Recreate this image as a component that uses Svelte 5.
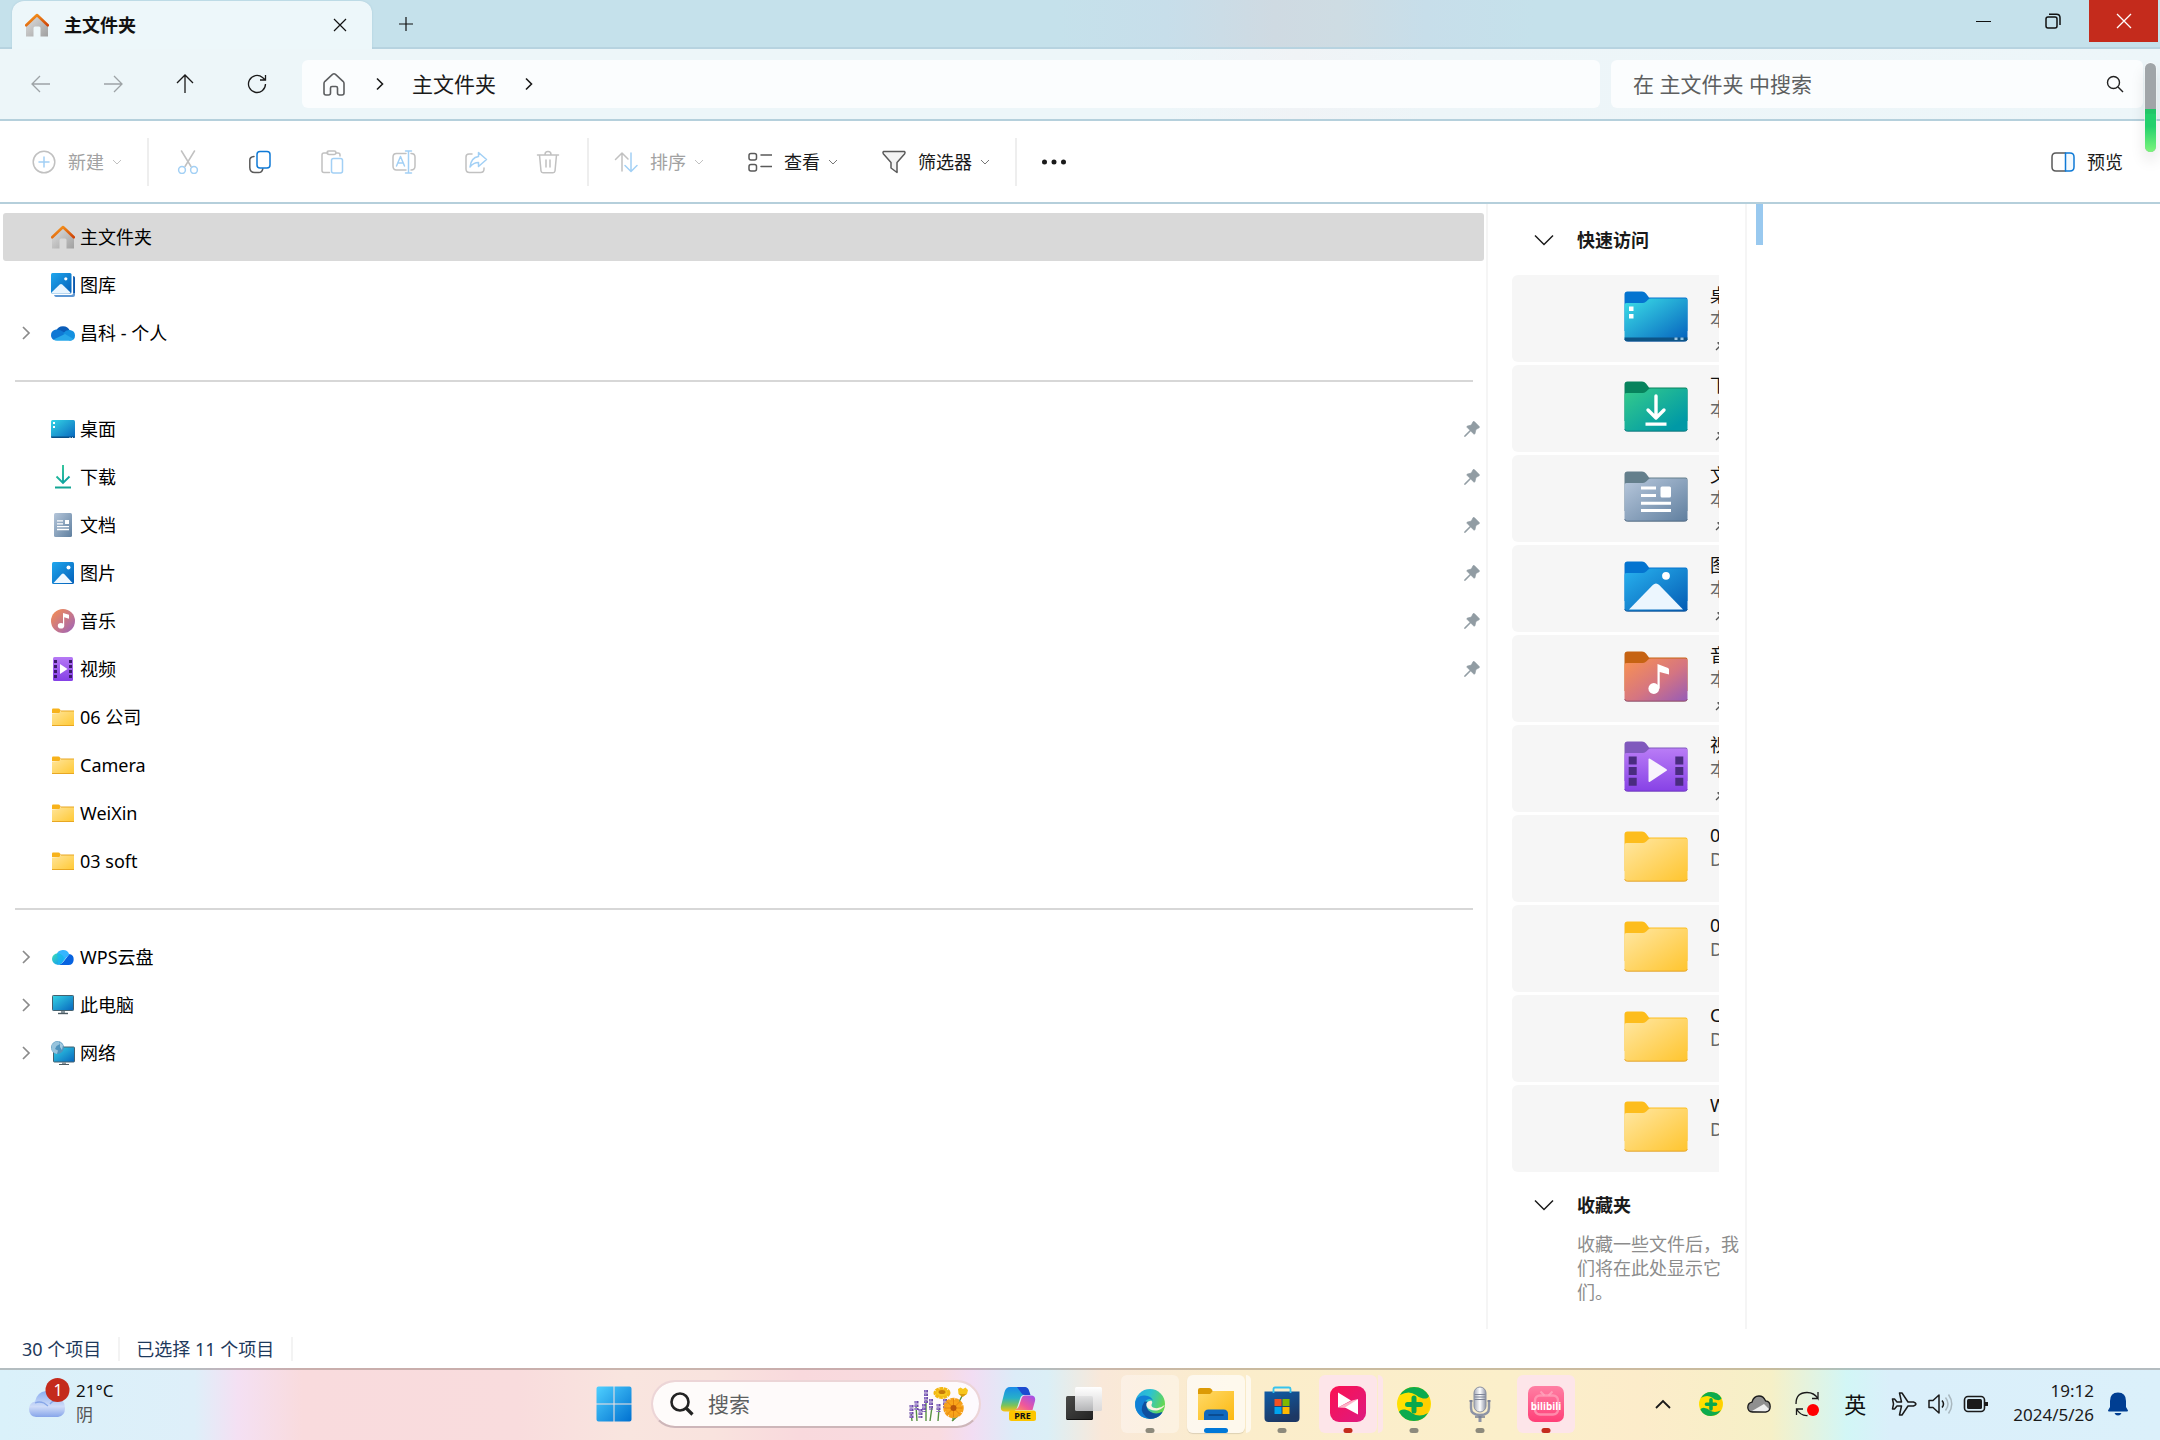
<script lang="ts">
	type NavItem = { icon: string; label: string; expandable?: boolean; pinned?: boolean };

	let selected = $state('主文件夹');
	let query = $state('');

	const groups: NavItem[][] = [
		[
			{ icon: 'home', label: '主文件夹' },
			{ icon: 'gallery', label: '图库' },
			{ icon: 'onedrive', label: '昌科 - 个人', expandable: true },
		],
		[
			{ icon: 'desktop', label: '桌面', pinned: true },
			{ icon: 'download', label: '下载', pinned: true },
			{ icon: 'document', label: '文档', pinned: true },
			{ icon: 'picture', label: '图片', pinned: true },
			{ icon: 'music', label: '音乐', pinned: true },
			{ icon: 'video', label: '视频', pinned: true },
			{ icon: 'folder', label: '06 公司' },
			{ icon: 'folder', label: 'Camera' },
			{ icon: 'folder', label: 'WeiXin' },
			{ icon: 'folder', label: '03 soft' },
		],
		[
			{ icon: 'wps', label: 'WPS云盘', expandable: true },
			{ icon: 'pc', label: '此电脑', expandable: true },
			{ icon: 'network', label: '网络', expandable: true },
		],
	];

	const quick = [
		{ kind: 'desktop', name: '桌面', place: '本地存储', pinned: true },
		{ kind: 'download', name: '下载', place: '本地存储', pinned: true },
		{ kind: 'document', name: '文档', place: '本地存储', pinned: true },
		{ kind: 'picture', name: '图片', place: '本地存储', pinned: true },
		{ kind: 'music', name: '音乐', place: '本地存储', pinned: true },
		{ kind: 'video', name: '视频', place: '本地存储', pinned: true },
		{ kind: 'folder', name: '06 公司', place: 'D:\\', pinned: false },
		{ kind: 'folder', name: '03 soft', place: 'D:\\', pinned: false },
		{ kind: 'folder', name: 'Camera', place: 'D:\\', pinned: false },
		{ kind: 'folder', name: 'WeiXin', place: 'D:\\', pinned: false },
	];

	const tools = [
		{ icon: 'cut', label: '剪切', off: true },
		{ icon: 'copy', label: '复制', off: false },
		{ icon: 'paste', label: '粘贴', off: true },
		{ icon: 'rename', label: '重命名', off: true },
		{ icon: 'share', label: '共享', off: true },
		{ icon: 'delete', label: '删除', off: true },
	];

	const apps = [
		{ icon: 'copilot', label: 'Copilot', cell: '', dot: '' },
		{ icon: 'taskview', label: '任务视图', cell: '', dot: '' },
		{ icon: 'edge', label: 'Edge', cell: 'light', dot: 'gray' },
		{ icon: 'explorer', label: '文件资源管理器', cell: 'active stacked', dot: 'blue' },
		{ icon: 'store', label: 'Store', cell: '', dot: 'gray' },
		{ icon: 'capture', label: '录屏', cell: 'pink stacked', dot: 'red' },
		{ icon: 'safe', label: '360', cell: '', dot: 'gray' },
		{ icon: 'mic', label: '录音机', cell: '', dot: 'gray' },
		{ icon: 'bili', label: '哔哩哔哩', cell: 'pink', dot: 'red' },
	];
</script>

{#snippet chevron(cls: string)}
	<svg class={cls} viewBox="0 0 10 6" width="10" height="6" fill="none" stroke="currentColor" aria-hidden="true"><path d="M1 1l4 4 4-4" /></svg>
{/snippet}

{#snippet pin()}
	<svg class="pin" viewBox="0 0 16 16" width="16" height="16" aria-hidden="true">
		<path fill="#919ca3" stroke="#919ca3" stroke-width=".6" d="M9 .7Q9.800 0 10.600.8l4.600 4.600q.7.8-.1 1.400L12 8.500l-1 4.100q-.4 1-1.300.3L6.700 10 1.300 15.500H.5v-.8L6 9.300 3 6.300q-.6-.8.400-1.200L7.300 4z" />
	</svg>
{/snippet}

{#snippet globe360()}
	<circle cx="17" cy="17" r="17" fill="#ffe000" />
	<path d="M29 5a17 17 0 0 1-24 24z" fill="#ffc800" opacity=".7" />
	<path d="M3 8Q8 0 17 0q10 0 15 9-1 3-6 2.500Q22 11 19 8 12 3 3 8zM31 26q-5 8-14 8-10 0-15-9 1-3 6-2.500 4 .5 7 3.500 7 5 16 0z" fill="#0cab4f" />
	<path d="M17 11v13M10.500 17.500h13" stroke="#0aa84c" stroke-width="5" stroke-linecap="round" />
{/snippet}

{#snippet navIcon(kind: string)}
	<svg class="nav-icon" viewBox="0 0 24 24" width="24" height="24" fill="none" aria-hidden="true">
		{#if kind === 'home'}
			<path d="M1 12.500L12 3l11 9.500v11h-7.500V15q0-1.500-1.500-1.500h-4Q8.500 13.500 8.500 15v8.500H1z" fill="url(#g-wall)" />
			<path d="M1.200 12.300L12 2l10.800 10.300" stroke="url(#g-roof)" stroke-width="2.600" stroke-linecap="round" stroke-linejoin="round" />
		{:else if kind === 'gallery'}
			<path d="M22.200 3Q24 3.500 24 5v17q0 2-2 2H5q-1.500 0-2-2h17q2.200 0 2.200-2z" fill="#5e97d3" />
			<path d="M22.200 3Q24 3.500 24 5v15h-1.800z" fill="#0a58ad" />
			<rect width="20.500" height="20.500" rx="1.500" fill="url(#g-pic)" />
			<path d="M.5 19.500l8.200-8q1.300-1.200 2.600 0l8.200 8q-.6 1-2 1H2q-1.200 0-1.500-1z" fill="#e8f5ff" />
			<circle cx="14.800" cy="5.800" r="1.600" fill="#fff" />
		{:else if kind === 'onedrive'}
			<path d="M5 10a7.500 7.500 0 0 1 14 0l-6 4z" fill="#0a5cb8" />
			<path d="M5 8.500Q9 8 12.500 11L18 14 3 19Q0 17.500 0 14.200 0 9.500 5 8.500z" fill="#0f78d4" />
			<path d="M12.500 12Q15 8.500 19 9q5 .8 5 5.500 0 5-5 5.200l-6-3z" fill="#1490df" />
			<path d="M2.500 18.500L14 13l8.500 5q-1.500 1.700-4 1.700H6q-2.200 0-3.500-1.200z" fill="#28a8ea" />
		{:else if kind === 'desktop'}
			<rect y="3" width="24" height="18" rx="1.500" fill="url(#g-desk)" />
			<path d="M0 19.500h24q0 1.500-1.500 1.500h-21Q0 21 0 19.500z" fill="#0b4f86" />
			<path d="M2 5h2v2H2zM2 9h2v2H2zM18.500 20h1v.8h-1zM21 20h1v.8h-1z" fill="#fff" />
		{:else if kind === 'download'}
			<path d="M12 0v18M5.500 11.500L12 18l6.500-6.500" stroke="url(#g-down)" stroke-width="1.900" />
			<path d="M4 22.500h16" stroke="#12a594" stroke-width="2" />
		{:else if kind === 'document'}
			<rect x="3" width="18" height="24" rx="1.500" fill="url(#g-doc)" />
			<path d="M6 7.800h6M6 10.800h6M6 13.600h12M6 16.500h12" stroke="#fff" stroke-width="1.300" />
			<rect x="14" y="7" width="4" height="4" fill="#fff" />
		{:else if kind === 'picture'}
			<rect x="1" y="1" width="22" height="22" rx="1.500" fill="url(#g-pic)" />
			<path d="M2.500 22l8.300-9q1.200-1.200 2.400 0l8.300 9z" fill="#eff8ff" />
			<circle cx="17.500" cy="6.500" r="2" fill="#fff" />
		{:else if kind === 'music'}
			<circle cx="12" cy="12" r="12" fill="url(#g-music)" />
			<ellipse cx="10" cy="16.800" rx="3.200" ry="2.800" fill="#fff" />
			<path d="M12 16.500V4l6 1.800v4L13.200 8.300v8.200z" fill="#fff" />
		{:else if kind === 'video'}
			<rect x="2" width="20" height="24" rx="1.500" fill="url(#g-video)" />
			<path d="M4.500 3v18M19.500 3v18" stroke="#3b1b6b" stroke-width="3" stroke-dasharray="3 2" />
			<path d="M9 7l7.500 5L9 17z" fill="#fff" />
		{:else if kind === 'folder'}
			<path d="M1 8V4.500Q1 3.500 2 3.500h5.500q1 0 1.500 1l.5 1-1 3z" fill="#f7b21b" />
			<path d="M1 8.500h7L10 6h13v14.500H1z" fill="url(#g-folder)" />
			<path d="M9.500 6H23M1 20.500h22" stroke="#e8a722" />
		{:else if kind === 'wps'}
			<path d="M5.500 10a6.700 6.700 0 0 1 12.800-.5L12 16z" fill="#35b6ff" />
			<circle cx="6.800" cy="14" r="5.800" fill="url(#g-wps)" />
			<path d="M6 20q4 0 7-4l3.500-4.500Q18 9.500 18.500 9a5.600 5.600 0 0 1-1 11z" fill="#0763e0" />
			<path d="M5.500 9Q10 8 14.500 13.500L11 18q-2 2-4.500 1.800 2-6-1-10.800z" fill="#18b9f2" opacity=".7" />
		{:else if kind === 'pc'}
			<rect x="1.500" y="2.500" width="21" height="15" rx=".8" fill="url(#g-desk)" stroke="#45616f" />
			<path d="M10 18h4v2h-4z" fill="#8a979e" /><path d="M7 20.500h10" stroke="#4b5a62" stroke-width="1.400" />
		{:else if kind === 'network'}
			<rect x="2.500" y="6" width="21" height="15" rx=".8" fill="url(#g-desk)" stroke="#45616f" />
			<path d="M11 21h4v2h-4z" fill="#8a979e" /><path d="M8 23.500h10" stroke="#4b5a62" />
			<circle cx="6.500" cy="6.500" r="6.500" fill="#4f93bd" />
			<path d="M1 3.500Q4 0 8 .4L9 3 5.500 5 4 8l3 1.500-1 3.400Q1 12 .3 8z" fill="#a9cfe4" opacity=".8" />
			<path d="M9 1l3 3-1 5-2-3z" fill="#c9e1ee" opacity=".7" />
		{/if}
	</svg>
{/snippet}

{#snippet folderIcon(kind: string)}
	<svg class="big-folder" viewBox="0 0 64 51" width="64" height="51" fill="none" aria-hidden="true">
		<path class="back {kind}" d="M.5 14V3.500Q.5.5 3.500.5H18q2.500 0 4 2l3 4h36.500q2 0 2 2V40H.500z" />
		<path fill="url(#f-{kind})" d="M.5 14q0-2 2-2H19q2 0 3.500-1.700l1.500-1.600q1-1.200 3-1.200h34.500q2 0 2 2v38q0 2.500-2.500 2.500H3Q.5 50 .5 47.500z" />
		<path class="edge {kind}" d="M.7 48.200q.5 2 2.500 2h57.600q2 0 2.500-2" />
		{#if kind === 'desktop'}
			<path d="M.5 46.500h63q0 3.500-2.500 3.500H3Q.5 50 .5 46.500z" fill="#0d5486" />
			<path d="M5 15.500h4.500V20H5zM5 23h4.500v4.500H5z" fill="#fff" />
			<path d="M50.500 46.500h3v2.500h-3zM56.500 46.500h3v2.500h-3z" fill="#9cc6e2" />
		{:else if kind === 'download'}
			<path d="M32 15v21M24 29l8 8 8-8" stroke="#fff" stroke-width="3.400" stroke-linecap="round" stroke-linejoin="round" />
			<path d="M21.500 43.200h21" stroke="#fff" stroke-width="3.200" />
		{:else if kind === 'document'}
			<path d="M17 17h15M17 24.500h15M17 32.200h30M17 39.500h30" stroke="#fff" stroke-width="3" />
			<rect x="36.500" y="15.500" width="10.500" height="11" rx="1.500" fill="#fff" />
		{:else if kind === 'picture'}
			<path d="M5 48.500L28.800 24q3.200-3 6.400 0L59 48.500z" fill="#ecf6fe" />
			<circle cx="42" cy="14.800" r="3.900" fill="#fff" />
		{:else if kind === 'music'}
			<circle cx="29.800" cy="37.500" r="5.400" fill="#fff" />
			<path d="M33.500 37.500V13l10.500 4q1 .5 1 1.500v5l-9.300-2.500v16.500z" fill="#fff" />
		{:else if kind === 'video'}
			<path d="M8.700 15.500v30M55.300 15.500v30" stroke="#4a2c80" stroke-width="8" stroke-dasharray="8 2.600" />
			<path d="M24.500 18.500q0-1.500 1.500-.8l16.500 10.500q1 .8 0 1.600L26 40.800q-1.500.7-1.500-.8z" fill="#f8f4fc" />
		{/if}
	</svg>
{/snippet}

{#snippet toolIcon(kind: string)}
	<svg viewBox="0 0 24 24" width="24" height="24" fill="none" stroke="currentColor" stroke-width="1.500" stroke-linecap="round" stroke-linejoin="round" aria-hidden="true">
		{#if kind === 'new'}
			<circle cx="12" cy="12" r="10.800" /><path class="blue" d="M12 7v10M7 12h10" />
		{:else if kind === 'cut'}
			<path d="M5.500 1l9.500 15.500M18.500 1L9 16.500" />
			<circle class="blue" cx="6" cy="20" r="3.400" /><circle class="blue" cx="18" cy="20" r="3.400" />
		{:else if kind === 'copy'}
			<path d="M6 6.500Q1.800 7 1.800 10v7.500q0 5 5 5h4q3.200 0 4-3.700" />
			<rect class="blue" x="9" y="1.500" width="13" height="16.500" rx="3" />
		{:else if kind === 'paste'}
			<path d="M8 3H4Q2 3 2 5v15.500q0 2 2 2h5.500M15.500 3H18q2 0 2 2v1" /><rect x="7" y="1" width="9" height="3.500" rx="1.700" />
			<rect class="blue" x="11.500" y="8.500" width="11" height="14.500" rx="2" />
		{:else if kind === 'rename'}
			<path d="M14 3.500H4.500Q1 3.500 1 7v9q0 4 3.500 4H14M19 3.500q4 0 4 3.500v9q0 4-4 4" />
			<path class="blue" d="M16.500 1v22M13.500 1h6M13.500 23h6M4.500 16l4-9.500 4 9.500M6 13h5" />
		{:else if kind === 'share'}
			<path d="M8 4H5Q2 4 2 7v12q0 3.500 3.500 3.500h11q3.500 0 3.500-3.500v-1" />
			<path class="blue" d="M14.500 2.500l8 7-8 7v-4q-5 0-8.500 4.500 1-9.500 8.500-10.500z" />
		{:else if kind === 'delete'}
			<path d="M1.500 5h21M3.500 5l1.500 16q.2 1.700 2 1.700h10q1.800 0 2-1.700L20.500 5M9 4.500q0-3 3-3t3 3M10 10v7M14 10v7" />
		{:else if kind === 'sort'}
			<path d="M8 21V3M1.500 9.500L8 3l6 6" /><path class="blue" d="M17 3v18M11 15.500l6 6 6-6" />
		{:else if kind === 'view'}
			<rect x="1" y="3.500" width="7.500" height="6.500" rx="2" /><rect x="1" y="14.500" width="7.500" height="6.500" rx="2" /><path d="M13 5h11M13 16.500h11" />
		{:else if kind === 'filter'}
			<path fill="#f3f3f3" d="M1.500 1.500h21q1 1 0 2.500L15 12.500v10l-6-4.500v-5.500L1.500 4q-1-1.500 0-2.500z" />
		{:else if kind === 'preview'}
			<path d="M14.500 3H5Q1 3 1 7v10q0 4 4 4h9.500" /><path class="blue" fill="#f3faff" d="M14.500 3H19q4 0 4 4v10q0 4-4 4h-4.500z" />
		{/if}
	</svg>
{/snippet}

{#snippet appIcon(kind: string)}
	<svg viewBox="0 0 36 36" width="36" height="36" fill="none" aria-hidden="true">
		{#if kind === 'copilot'}
			<path d="M10 1h14q3.500 0 4.500 3.500L30 9h-6q-3 0-4 4l-3 9q-1.500 3.500-5 3.500H5q-5 0-4-5.500L4.500 6Q6 1 10 1z" fill="url(#a-cop1)" />
			<path d="M17 1h7.500q3.500 0 4.500 3.500L30.500 9H25q-3 0-4-2.500z" fill="#1d4bd0" />
			<path d="M25 9.500h6q5 0 4 5.500l-2.500 9H14q4-1 5-4l2.500-7.500Q22.500 9.500 25 9.500z" fill="url(#a-cop2)" />
			<rect x="9" y="24.500" width="27" height="10.500" rx="2.500" fill="#fcc500" />
			<text x="22.500" y="33" text-anchor="middle" font-size="9" font-weight="700" fill="#111">PRE</text>
		{:else if kind === 'taskview'}
			<rect x="0" y="10" width="27" height="24" rx="1.500" fill="url(#a-dark)" />
			<path d="M1 33.500h25" stroke="#111" />
			<rect x="9" y="1" width="27" height="24" rx="1.500" fill="url(#a-glass)" />
		{:else if kind === 'edge'}
			<circle cx="18" cy="18" r="15" fill="url(#a-edge)" />
			<path d="M3.200 16Q5 9 13 9.500q6 .5 8 5-4-3-7 0-3.500 4-1 9 2.500 5 8 5.500 5 .5 9.500-2.500Q26 33 18 33 5 32 3.200 20z" fill="#1180d6" />
			<path d="M12.500 15.500q-6 9 1 15 1.500 1.500 4 2.300 9 .4 13-7-5 2.500-9.500 1.200-6-2-6.500-7-.2-3 .9-4.600z" fill="#0f4f9e" />
			<path d="M19.500 14.800q-3.500-.6-5 2.400-.8 4 3.200 6 4.800 2.300 9 .8 5-2 5.800-5Q27 24 21 21.500q-2.500-1.500-1-4 .8-1.500-.5-2.700z" fill="#fdf0e2" />
		{:else if kind === 'explorer'}
			<path d="M0 8V4q0-2 2-2h9q1.500 0 2.500 1.200L15 5.500 12 9z" fill="#dc9a05" />
			<path d="M0 8h12l3-3h21v29H0z" fill="url(#a-exp)" />
			<path d="M6 34v-6q0-4.500 4.500-4.500h15Q30 23.500 30 28v6z" fill="#0f68bd" /><path d="M11 29h14" stroke="#0a4382" stroke-width="1.600" stroke-linecap="round" />
		{:else if kind === 'store'}
			<path d="M.5 5.500h35V32q0 4-4 4h-27q-4 0-4-4z" fill="url(#a-store)" />
			<path d="M9.500 7V3q0-1.500 1.500-1.500h14q1.500 0 1.500 1.500v4" stroke="#36c3ee" stroke-width="1.800" />
			<path d="M10.500 13h7v7h-7z" fill="#f25022" /><path d="M18.500 13h7v7h-7z" fill="#7fba00" /><path d="M10.500 21h7v7h-7z" fill="#00a4ef" /><path d="M18.500 21h7v7h-7z" fill="#ffb900" />
		{:else if kind === 'capture'}
			<rect width="36" height="36" rx="9" fill="url(#a-cap)" />
			<path d="M8 21.500L22 14.500 28 13 16 22z" fill="#ffb3c8" />
			<path d="M8 6.500L21 14.500 8 21.500zM28 13v15.500L15 21.500z" fill="#fff" />
		{:else if kind === 'safe'}
			<g transform="translate(1 1)">{@render globe360()}</g>
		{:else if kind === 'mic'}
			<path d="M9 14v8q0 7 9 7t9-7v-8" stroke="#8d93a5" stroke-width="2.400" />
			<rect x="12" y="1" width="12" height="25" rx="6" fill="url(#a-mic)" stroke="#8a90a0" />
			<path d="M12.500 8.500h11M12.500 11h11M12.500 13.500h11" stroke="#7f8597" />
			<path d="M18 29v7" stroke="#8d93a5" stroke-width="3" /><path d="M7.500 15h3M25.500 15h3M13 31h10" stroke="#777d90" stroke-width="1.600" />
		{:else if kind === 'bili'}
			<rect width="36" height="36" rx="7" fill="url(#a-bili)" />
			<rect x="7" y="9.500" width="23" height="19" rx="5" stroke="#ffa5bd" stroke-width="2.500" opacity=".7" /><path d="M12.500 5.500l4 4M24.500 5.500l-4 4" stroke="#ffa5bd" stroke-width="2" opacity=".8" />
			<text x="18" y="24" text-anchor="middle" font-size="10" font-weight="700" fill="#fff">bilibili</text>
		{/if}
	</svg>
{/snippet}

<svg class="defs" width="0" height="0" aria-hidden="true">
	<defs>
		<linearGradient id="g-wall" x2="1" y2="1"><stop stop-color="#e0e0e0" /><stop offset="1" stop-color="#a0a0a0" /></linearGradient>
		<linearGradient id="g-roof" x2="1" y2="1"><stop stop-color="#fba01f" /><stop offset="1" stop-color="#cf4307" /></linearGradient>
		<linearGradient id="g-pic" x2="1" y2="1"><stop stop-color="#1fa7ee" /><stop offset="1" stop-color="#045fb8" /></linearGradient>
		<linearGradient id="g-desk" x2="1" y2="1"><stop stop-color="#35d5e6" /><stop offset="1" stop-color="#0765bd" /></linearGradient>
		<linearGradient id="g-down" gradientUnits="userSpaceOnUse" x1="0" y1="0" x2="16" y2="20"><stop stop-color="#3bd394" /><stop offset="1" stop-color="#069ba0" /></linearGradient>
		<linearGradient id="g-doc" x2="1" y2="1"><stop stop-color="#b5c6da" /><stop offset="1" stop-color="#5f7f9f" /></linearGradient>
		<linearGradient id="g-music" x2="1" y2="1"><stop stop-color="#f98f4e" /><stop offset="1" stop-color="#9b62bd" /></linearGradient>
		<linearGradient id="g-video" x2="0" y2="1"><stop stop-color="#b679f5" /><stop offset="1" stop-color="#8440e6" /></linearGradient>
		<linearGradient id="g-folder" x2="1" y2="1"><stop stop-color="#ffe59b" /><stop offset="1" stop-color="#ffc935" /></linearGradient>
		<linearGradient id="g-wps" x2="1" y2="1"><stop stop-color="#3fe0b4" /><stop offset="1" stop-color="#0c8ffb" /></linearGradient>
		<linearGradient id="f-desktop" x2="1" y2="1"><stop stop-color="#3ce0e8" /><stop offset="1" stop-color="#0560bd" /></linearGradient>
		<linearGradient id="f-download" x2="1" y2="1"><stop stop-color="#36cc8b" /><stop offset=".85" stop-color="#0099a6" /></linearGradient>
		<linearGradient id="f-document" x2="1" y2="1"><stop stop-color="#b8c8dc" /><stop offset="1" stop-color="#607f9f" /></linearGradient>
		<linearGradient id="f-picture" x2="1" y2="1"><stop stop-color="#28b2ef" /><stop offset="1" stop-color="#045bb3" /></linearGradient>
		<linearGradient id="f-music" x2="1" y2="1"><stop stop-color="#fb9350" /><stop offset=".55" stop-color="#d57581" /><stop offset="1" stop-color="#965bb8" /></linearGradient>
		<linearGradient id="f-video" x2="0" y2="1"><stop stop-color="#b97cf6" /><stop offset="1" stop-color="#8742e6" /></linearGradient>
		<linearGradient id="f-folder" x2="1" y2="1"><stop stop-color="#ffe7a3" /><stop offset="1" stop-color="#ffc52e" /></linearGradient>
		<linearGradient id="a-win" x2="1" y2="1"><stop stop-color="#4fd0ff" /><stop offset="1" stop-color="#0070d0" /></linearGradient>
		<linearGradient id="a-cop1" x2="0" y2="1"><stop stop-color="#1a8be8" /><stop offset=".45" stop-color="#27b0c8" /><stop offset=".75" stop-color="#7cc35a" /><stop offset="1" stop-color="#fbc313" /></linearGradient>
		<linearGradient id="a-cop2" x1="1" x2="0" y2="1"><stop stop-color="#9a4ff0" /><stop offset=".6" stop-color="#f0589a" /><stop offset="1" stop-color="#fd9a54" /></linearGradient>
		<linearGradient id="a-dark" x2="1" y2="1"><stop stop-color="#4a4a48" /><stop offset="1" stop-color="#222" /></linearGradient>
		<linearGradient id="a-glass" x2="0" y2="1"><stop stop-color="#fff" /><stop offset="1" stop-color="#d4d5d8" stop-opacity=".8" /></linearGradient>
		<linearGradient id="a-edge" x2="1" y2=".4"><stop stop-color="#25a6e6" /><stop offset=".5" stop-color="#2dc3cf" /><stop offset="1" stop-color="#66d752" /></linearGradient>
		<linearGradient id="a-exp" x2="1" y2="1"><stop stop-color="#ffd968" /><stop offset="1" stop-color="#fcb910" /></linearGradient>
		<linearGradient id="a-store" x2=".4" y2="1"><stop stop-color="#0f5ca6" /><stop offset="1" stop-color="#1d3864" /></linearGradient>
		<linearGradient id="a-cap" x2="1" y2="1"><stop stop-color="#fb1151" /><stop offset="1" stop-color="#dd1a82" /></linearGradient>
		<linearGradient id="a-mic"><stop stop-color="#a3a9b8" /><stop offset=".5" stop-color="#fff" /><stop offset="1" stop-color="#8b91a4" /></linearGradient>
		<linearGradient id="a-bili" x2="0" y2="1"><stop stop-color="#ff7fa3" /><stop offset="1" stop-color="#ff3f78" /></linearGradient>
		<linearGradient id="a-cloud" x2="0" y2="1"><stop stop-color="#8aaef0" /><stop offset=".6" stop-color="#cfdcf8" /><stop offset="1" stop-color="#86a5ea" /></linearGradient>
	</defs>
</svg>

<div class="screen">
	<header class="titlebar">
		<div class="tab">
			{@render navIcon('home')}
			<span class="tab-title">主文件夹</span>
			<button class="tab-close" aria-label="关闭标签页">
				<svg viewBox="0 0 14 14" width="14" height="14" stroke="currentColor" stroke-width="1.200"><path d="M1 1l12 12M13 1L1 13" /></svg>
			</button>
		</div>
		<button class="tab-add" aria-label="添加新标签页">
			<svg viewBox="0 0 16 16" width="16" height="16" stroke="currentColor" stroke-width="1.200"><path d="M8 1v14M1 8h14" /></svg>
		</button>
		<div class="window-buttons">
			<button aria-label="最小化"><svg viewBox="0 0 16 16" width="16" height="16" stroke="currentColor"><path d="M0 8.500h15" /></svg></button>
			<button aria-label="还原"><svg viewBox="0 0 16 16" width="16" height="16" fill="none" stroke="currentColor" stroke-width="1.500"><rect x="1" y="4" width="11" height="11" rx="2" /><path d="M4 1.200h7.500q3.500 0 3.500 3.500V12" /></svg></button>
			<button class="close" aria-label="关闭"><svg viewBox="0 0 16 16" width="16" height="16" stroke="currentColor" stroke-width="1.300"><path d="M1 1l14 14M15 1L1 15" /></svg></button>
		</div>
	</header>

	<div class="navbar">
		<button class="nav-btn" disabled aria-label="后退"><svg viewBox="0 0 20 20" width="20" height="20"><path d="M19 10H1M9 2l-8 8 8 8" /></svg></button>
		<button class="nav-btn" disabled aria-label="前进"><svg viewBox="0 0 20 20" width="20" height="20"><path d="M1 10h18M11 2l8 8-8 8" /></svg></button>
		<button class="nav-btn" aria-label="上移"><svg viewBox="0 0 20 20" width="20" height="20"><path d="M10 19V1M2 9l8-8 8 8" /></svg></button>
		<button class="nav-btn" aria-label="刷新"><svg viewBox="0 0 20 20" width="20" height="20"><path d="M18.500 10A8.500 8.500 0 1 1 15.500 3.500L18.500 6M18.500 1v5h-5.500" /></svg></button>
		<nav class="address" aria-label="地址">
			<svg class="crumb-home" viewBox="0 0 24 24" width="24" height="24" fill="none"><path d="M2 11.500Q2 10.300 3 9.300L10.500 2.400q1.500-1.200 3 0L21 9.300q1 1 1 2.200V21q0 2-2 2h-2.500q-2 0-2-2v-5q0-1.500-1.500-1.500h-4Q8.500 14.500 8.500 16v5q0 2-2 2H4q-2 0-2-2z" /></svg>
			<svg class="crumb-sep" viewBox="0 0 8 14" width="8" height="14"><path d="M1 1.500L6.500 7 1 12.500" /></svg>
			<a href="#home">主文件夹</a>
			<svg class="crumb-sep" viewBox="0 0 8 14" width="8" height="14"><path d="M1 1.500L6.500 7 1 12.500" /></svg>
		</nav>
		<div class="search">
			<input type="search" aria-label="搜索" placeholder="在 主文件夹 中搜索" bind:value={query} />
			<svg viewBox="0 0 18 18" width="18" height="18" fill="none" stroke="#222" stroke-width="1.400"><circle cx="7.500" cy="7.500" r="6" /><path d="M12 12l5 5" /></svg>
		</div>
		<div class="meter" aria-hidden="true"><span></span></div>
	</div>

	<div class="toolbar">
		<button class="menu" disabled>{@render toolIcon('new')}<span>新建</span>{@render chevron('caret')}</button>
		<i class="divider"></i>
		{#each tools as t}
			<button class="tool" disabled={t.off} aria-label={t.label}>{@render toolIcon(t.icon)}</button>
		{/each}
		<i class="divider"></i>
		<button class="menu" disabled>{@render toolIcon('sort')}<span>排序</span>{@render chevron('caret')}</button>
		<button class="menu">{@render toolIcon('view')}<span>查看</span>{@render chevron('caret')}</button>
		<button class="menu">{@render toolIcon('filter')}<span>筛选器</span>{@render chevron('caret')}</button>
		<i class="divider"></i>
		<button class="menu" aria-label="查看更多"><svg viewBox="0 0 24 24" width="24" height="24"><path class="dots" d="M2.500 12h0M12 12h0M21.500 12h0" /></svg></button>
		<button class="menu preview">{@render toolIcon('preview')}<span>预览</span></button>
	</div>

	<main class="body">
		<nav class="sidebar" aria-label="导航窗格">
			{#each groups as group, g}
				{#if g > 0}<hr />{/if}
				<ul>
					{#each group as item}
						<li>
							<button class="row" class:selected={selected === item.label} onclick={() => (selected = item.label)}>
								<span class="expander">
									{#if item.expandable}
										<svg viewBox="0 0 9 14" width="9" height="14" fill="none" stroke="#8b8b8b" stroke-width="1.700"><path d="M1 1l6 6-6 6" /></svg>
									{/if}
								</span>
								{@render navIcon(item.icon)}
								<span class="row-label">{item.label}</span>
								{#if item.pinned}{@render pin()}{/if}
							</button>
						</li>
					{/each}
				</ul>
			{/each}
		</nav>

		<section class="content">
			<h2>
				<svg viewBox="0 0 20 12" width="20" height="12" fill="none" stroke="#1a1a1a" stroke-width="1.500"><path d="M1 1.500l9 9 9-9" /></svg>
				快速访问
			</h2>
			<ul class="cards">
				{#each quick as q}
					<li class="card">
						{@render folderIcon(q.kind)}
						<div class="card-text">
							<span class="name">{q.name}</span>
							<span class="place">{q.place}</span>
							{#if q.pinned}
								<svg class="card-pin" viewBox="0 0 14 14" width="14" height="14" fill="none" stroke="#555" stroke-width="1.300"><path d="M1 13l4-4M8 1l5 5-3 1-2 4-5-5 4-2z" /></svg>
							{/if}
						</div>
					</li>
				{/each}
			</ul>
			<h2 class="second">
				<svg viewBox="0 0 20 12" width="20" height="12" fill="none" stroke="#1a1a1a" stroke-width="1.500"><path d="M1 1.500l9 9 9-9" /></svg>
				收藏夹
			</h2>
			<p class="hint">收藏一些文件后，我们将在此处显示它们。</p>
		</section>

		<aside class="preview-pane" aria-label="预览窗格"><span class="marker"></span></aside>
	</main>

	<footer class="status">
		<span>30 个项目</span>
		<span>已选择 11 个项目</span>
	</footer>

	<div class="taskbar">
		<button class="weather">
			<svg viewBox="0 0 42 42" width="42" height="42" fill="none" aria-hidden="true">
				<path d="M7 40q-7-1-7-8 0-6 6-7.500Q8 15 17 14q9 0 12 8 7 1 7 9 0 8-7 9z" fill="url(#a-cloud)" />
				<path d="M6 26q4-2 9 0l4 3M29 23q-5 0-8 4" stroke="#86a6e8" stroke-width="1.300" />
				<circle cx="28.500" cy="13" r="12" fill="#c42b1c" />
				<text x="29" y="19" text-anchor="middle" font-size="16" fill="#fff">1</text>
			</svg>
			<span class="weather-text"><span>21°C</span><span class="dim">阴</span></span>
		</button>

		<div class="apps">
			<button class="app" aria-label="开始">
				<svg viewBox="0 0 36 36" width="36" height="36"><path fill="url(#a-win)" d="M2.500.5h15v17H.500v-15q0-2 2-2zM18.500.5h15q2 0 2 2v15h-17zM.500 18.500h17v17h-15q-2 0-2-2zM18.500 18.500h17v15q0 2-2 2h-15z" /></svg>
			</button>
			<label class="task-search">
				<svg viewBox="0 0 24 24" width="24" height="24" fill="none" stroke="#222" stroke-width="2.600"><circle cx="10" cy="10" r="8.500" /><path d="M16 16l6.500 6.500" stroke-width="3.200" /></svg>
				<input type="text" placeholder="搜索" />
				<svg viewBox="0 0 60 36" width="60" height="36" fill="none" aria-hidden="true">
					<path d="M3 35l-1-9M8 35l-1-15M17 35V14M21 35l2-14M29 35l1-12M36 25l3-10M54 8l-5 10M44 35v-8M51 28l-8 7" stroke="#55913f" stroke-width="1.400" />
					<path d="M2.500 19v13M7.500 15v9M17 4v13M15 18v8M22 13v11M11.500 23v9M29.500 18v8M36 13v9" stroke="#6d4ea6" stroke-width="4" stroke-dasharray="2.500 1" />
					<path d="M2 19v13M7 15v9M16.500 4v13M14.500 18v8M21.500 13v11M11 23v9M29 18v8M35.500 13v9" stroke="#9b7fcf" stroke-width="2" stroke-dasharray="2 1.500" />
					<ellipse cx="33" cy="7" rx="7" ry="4.500" fill="#f8c820" stroke="#f3b814" stroke-width="3" stroke-dasharray="3.500 .6" /><ellipse cx="33" cy="6" rx="3.500" ry="2" fill="#c77b09" />
					<path d="M49 3l2.500-1.500L54 3l2.500-1.500L59 4l-1 4-4.500 3L49.500 8z" fill="#f7c51c" /><path d="M50 8l3.500 3 4-3z" fill="#d99a10" />
					<circle cx="44.500" cy="22" r="8.500" fill="#f9a51a" stroke="#f6a01a" stroke-width="3.500" stroke-dasharray="4 .6" />
					<path d="M44.500 13v18M35.500 22h18M38 15.500l13 13M51 15.500l-13 13" stroke="#e07d08" stroke-width=".8" />
					<circle cx="44.500" cy="22" r="3" fill="#b9560a" />
				</svg>
			</label>
			{#each apps as a}
				<button class="app {a.cell}" aria-label={a.label}>
					{@render appIcon(a.icon)}
					{#if a.dot}<span class="dot {a.dot}"></span>{/if}
				</button>
			{/each}
		</div>

		<div class="tray">
			<button class="tray-btn" aria-label="显示隐藏的图标"><svg viewBox="0 0 16 10" width="16" height="10" fill="none" stroke="#1a1a1a" stroke-width="1.800"><path d="M1 9l7-7 7 7" /></svg></button>
			<button class="tray-btn" aria-label="360"><svg viewBox="0 0 34 34" width="24" height="24">{@render globe360()}</svg></button>
			<button class="tray-btn" aria-label="OneDrive">
				<svg viewBox="0 0 24 18" width="24" height="18"><path d="M5.500 17Q.8 16.500.8 12.200 1 8 5 7.200 6.500 1 12 1q4.500 0 6.500 4.800 4.700.4 4.700 5.600 0 5-4.500 5.600z" fill="#8f8f8f" stroke="#1a1a1a" stroke-width="1.300" /><path d="M5 16l12-7 5 5q-1 2-3.500 2.200z" fill="#eee" /></svg>
			</button>
			<button class="tray-btn" aria-label="更新">
				<svg viewBox="0 0 24 26" width="24" height="26" fill="none" stroke="#1a1a1a" stroke-width="1.300"><path d="M1 13Q1 1.500 12 1.500q7 0 11 6V1M23 7.500h-6M1.500 24v-6H8M1.500 18q4 7 11 6.500" /><circle cx="18" cy="19" r="6" fill="#f00" stroke="none" /></svg>
			</button>
			<button class="tray-btn ime">英</button>
			<button class="tray-group" aria-label="网络、音量和电池">
				<svg viewBox="0 0 26 26" width="26" height="26" fill="none" stroke="#1a1a1a" stroke-width="1.500" stroke-linejoin="round"><path d="M1.500 8h2L6 11h4.500L8.500 2H11l6 9h5.500q2.500 1 2.500 2t-2.500 2H17l-6 9H8.500l2-9H6l-2.500 3h-2l1-5z" /></svg>
				<svg viewBox="0 0 26 22" width="26" height="22" fill="none" stroke="#1a1a1a" stroke-width="1.500" stroke-linejoin="round"><path d="M2 7.500h4L12 2v18l-6-5.500H2z" /><path d="M15 7.500q3 3.500 0 7" /><path d="M18.500 4.500q5 6.500 0 13M21.500 1.500q6.500 9.500 0 19" stroke="#a9b8bf" /></svg>
				<svg viewBox="0 0 26 18" width="26" height="18" fill="none"><rect x="1.500" y="1.500" width="20" height="15" rx="3.500" stroke="#1a1a1a" stroke-width="1.600" /><rect x="4" y="4" width="15" height="10" rx="1.500" fill="#1a1a1a" /><path d="M23.500 7v4" stroke="#1a1a1a" stroke-width="3" /></svg>
			</button>
			<button class="clock"><span>19:12</span><span>2024/5/26</span></button>
			<button class="bell" aria-label="通知"><svg viewBox="0 0 20 24" width="20" height="24" fill="#003e92"><path d="M2 9q0-8.500 8-8.500T18 9v6l2 3.500q0 1-1 1H1q-1 0-1-1L2 15zM6.500 21h7q-1 2.500-3.500 2.500T6.500 21z" /></svg></button>
		</div>
	</div>
</div>

<style>
	:global(body) {
		margin: 0;
		background: #fff;
	}
	.screen {
		min-height: 100vh;
		display: flex;
		flex-direction: column;
		font-family: 'Noto Sans', 'Noto Sans CJK SC', sans-serif;
		font-size: 18px;
		line-height: 24px;
		color: #111;
	}
	.defs { position: absolute; }
	svg { display: block; flex-shrink: 0; }
	button {
		display: flex;
		align-items: center;
		padding: 0;
		border: 0;
		background: none;
		font: inherit;
		color: inherit;
	}
	input {
		min-width: 0;
		flex: 1;
		padding: 0;
		border: 0;
		outline: 0;
		background: none;
		font: inherit;
		font-size: 21px;
	}
	input::placeholder { color: #5d5f60; opacity: 1; }
	ul { list-style: none; margin: 0; padding: 0; }

	.titlebar {
		display: flex;
		height: 47px;
		padding-left: 12px;
		border-bottom: 2px solid #b7d3e0;
		background: linear-gradient(90deg, #c5e1eb 0 49%, #c7deea 54%, #cfdae2 59%, #cedce3 62%, #c7deea 66%, #c5e1eb 71%);
	}
	.tab {
		display: flex;
		align-items: center;
		box-sizing: border-box;
		width: 360px;
		height: 48px;
		margin-top: 1px;
		padding: 0 25px 0 13px;
		border-radius: 12px 12px 0 0;
		background: #edf7fa;
		box-shadow: 0 0 2px #a9c9d8;
		clip-path: inset(-2px -2px 0 -2px);
	}
	.tab-title {
		margin-left: 15px;
		font-weight: 700;
	}
	.tab-close { margin-left: auto; }
	.tab-add {
		width: 68px;
		justify-content: center;
	}
	.window-buttons {
		display: flex;
		margin-left: auto;
		padding-right: 2px;
	}
	.window-buttons button {
		box-sizing: border-box;
		width: 69px;
		height: 42px;
		padding-right: 4px;
		justify-content: center;
	}
	.window-buttons .close {
		padding-right: 0;
		background: #c42b1c;
		color: #fff;
	}

	.navbar {
		position: relative;
		display: flex;
		align-items: center;
		height: 70px;
		padding: 0 17px 0 5px;
		border-bottom: 2px solid #b5d0dc;
		background: linear-gradient(90deg, #edf6f9 0 54%, #f0f3f6 60%, #edf5f8 66%, #edf6f9);
	}
	.nav-btn {
		width: 72px;
		height: 48px;
		justify-content: center;
	}
	.nav-btn svg {
		fill: none;
		stroke: #1a1a1a;
		stroke-width: 1.3;
	}
	.nav-btn:disabled svg { stroke: #9da3a6; }
	.address, .search {
		display: flex;
		align-items: center;
		box-sizing: border-box;
		height: 48px;
		border-radius: 6px;
		background: #fbfdfe;
		font-size: 21px;
	}
	.address {
		flex: 1;
		margin: 0 11px 0 9px;
		padding-left: 20px;
	}
	.address a {
		margin: 0 29px 0 28px;
		color: #1a1a1a;
		text-decoration: none;
	}
	.crumb-home {
		margin-right: 30px;
		stroke: #5c5e60;
		stroke-width: 1.6;
	}
	.crumb-sep {
		fill: none;
		stroke: #1a1a1a;
		stroke-width: 1.6;
	}
	.search {
		width: 532px;
		padding: 0 19px 0 22px;
	}
	/* microphone level bar floating on the right edge */
	.meter {
		position: absolute;
		top: 14px;
		right: 4px;
		z-index: 2;
		width: 11px;
		height: 89px;
		border-radius: 6px;
		background: #a0a5a8;
		overflow: hidden;
		box-shadow: 0 8px 14px 2px rgba(0, 0, 0, 0.08), 0 0 0 1px rgba(255, 255, 255, 0.5);
	}
	.meter span {
		display: block;
		height: 43px;
		margin-top: 46px;
		background: linear-gradient(#22c568 0 10%, #23d06c 12% 40%, #7df57c);
	}

	.toolbar {
		display: flex;
		align-items: center;
		height: 81px;
		padding-left: 10px;
		border-bottom: 2px solid #b5cfdb;
		background: #fff;
	}
	.divider {
		width: 2px;
		height: 48px;
		margin: 0 3px;
		background: #eee;
	}
	.menu {
		height: 48px;
		padding: 0 22px;
		color: #1a1a1a;
	}
	.menu span { margin-left: 12px; white-space: nowrap; }
	.menu svg, .tool svg { stroke: #5a5a5a; }
	.menu :global(.caret) { margin-left: 8px; stroke: #777; }
	.menu:disabled { color: #a2a2a2; }
	.menu:disabled svg, .tool:disabled svg { stroke: #c1c1c1; }
	.dots {
		stroke: #1a1a1a;
		stroke-width: 5;
		stroke-linecap: round;
	}
	.tool {
		width: 72px;
		height: 48px;
		justify-content: center;
	}
	.blue { stroke: #0f7ad6; }
	button:disabled .blue { stroke: #a2d0f5; }
	.preview { margin-left: auto; padding-right: 37px; }

	.body {
		flex: 1;
		display: grid;
		grid-template-columns: minmax(0, 1fr) 261px minmax(0, 413px);
	}
	.sidebar { padding: 9px 2px 0 3px; }
	.row {
		width: 100%;
		height: 48px;
		padding: 0 4px 0 19px;
		border-radius: 3px;
		color: #000;
	}
	.row.selected { background: #d9d9d9; }
	.expander { width: 29px; }
	.row-label { margin-left: 5px; }
	.row .pin { margin-left: auto; }
	hr {
		height: 2px;
		margin: 23px 11px 23px 12px;
		border: 0;
		background: #d7d7d7;
	}

	.content {
		box-sizing: border-box;
		border: solid #f5f5f5;
		border-width: 0 2px;
	}
	h2 {
		display: flex;
		align-items: center;
		gap: 23px;
		box-sizing: border-box;
		height: 71px;
		margin: 0;
		padding: 0 0 0 46px;
		font-size: 18px;
		font-weight: 700;
		color: #1a1a1a;
	}
	h2.second {
		height: 60px;
		padding-top: 6px;
	}
	.cards {
		display: flex;
		flex-direction: column;
		gap: 3px;
		margin: 0 26px 0 24px;
	}
	.card {
		display: flex;
		gap: 22px;
		box-sizing: border-box;
		height: 87px;
		padding-left: 112px;
		border-radius: 6px 0 0 6px;
		background: #f6f6f6;
		overflow: hidden;
	}
	.big-folder { margin-top: 16px; }
	.card-text {
		display: flex;
		flex-direction: column;
		padding-top: 8px;
		white-space: nowrap;
	}
	.place { color: #666; }
	.card-pin { margin: 6px 0 0 5px; }
	.back { fill: #fdbd1c; }
	.back.desktop, .back.picture { fill: #0474d0; }
	.back.download { fill: #07835d; }
	.back.document { fill: #647f8c; }
	.back.music { fill: #c66313; }
	.back.video { fill: #8059bd; }
	.edge { stroke: #e5a324; }
	.edge.desktop, .edge.picture { stroke: #0a5299; }
	.edge.download { stroke: #08757c; }
	.edge.document { stroke: #4e6780; }
	.edge.music { stroke: #8a4763; }
	.edge.video { stroke: #6b35bd; }
	.hint {
		margin: 0 2px 0 89px;
		color: #8c8c8c;
	}
	.marker {
		display: block;
		width: 7px;
		height: 41px;
		margin-left: 9px;
		background: #99c9ef;
	}

	.status {
		display: flex;
		align-items: center;
		height: 39px;
		padding-left: 22px;
		color: #1e395b;
	}
	.status span {
		padding-right: 17px;
		margin-right: 16px;
		border-right: 2px solid #f3f3f3;
	}

	.taskbar {
		display: grid;
		grid-template-columns: 1fr auto 1fr;
		height: 70px;
		border-top: 2px solid rgba(90, 70, 60, 0.3);
		background: linear-gradient(90deg, #daf1fa 0, #deeff9 9%, #f4e0f3 11%, #f9dbdd 14%, #f9dcdd 24%, #f9e5df 29%, #f9e3de 33%, #f9d9dd 37%, #f9dbe0 43.5%, #f2ddf3 45%, #dcecf8 47%, #dbeff6 48.5%, #f9e8d9 51%, #fbedcb 57%, #fbefca 70%, #fcecca 76%, #f6f0c7 82%, #d2f6f6 85.5%, #daeffa 87.5%, #dbf0fa);
		background-origin: border-box;
	}
	.weather {
		justify-self: start;
		gap: 5px;
		padding-left: 29px;
		font-size: 17px;
	}
	.weather svg { margin-bottom: 14px; }
	.weather-text, .clock {
		display: flex;
		flex-direction: column;
		align-items: flex-start;
		padding-bottom: 4px;
	}
	.dim { color: #555; }
	.apps {
		display: flex;
		align-items: center;
		padding-bottom: 2px;
	}
	.app {
		position: relative;
		box-sizing: border-box;
		width: 58px;
		height: 58px;
		margin: 0 4px;
		justify-content: center;
		border-radius: 6px;
	}
	.light { background: rgba(255, 255, 255, 0.35); }
	.active {
		background: rgba(255, 255, 255, 0.65);
		box-shadow: 0 1px 1px rgba(0, 0, 0, 0.12);
	}
	.pink { background: #fde5e9; }
	.stacked::after {
		content: '';
		position: absolute;
		top: 0;
		right: -6px;
		width: 5px;
		height: 100%;
		border-radius: 0 6px 6px 0;
		background: inherit;
	}
	.dot {
		position: absolute;
		bottom: 0;
		left: 50%;
		width: 9px;
		height: 5px;
		border-radius: 3px;
		transform: translateX(-50%);
		background: #8d8a7c;
	}
	.dot.blue { width: 24px; background: #0078d8; }
	.dot.red { background: #c42b1c; }
	.task-search {
		display: flex;
		align-items: center;
		box-sizing: border-box;
		width: 330px;
		height: 48px;
		margin: 0 4px;
		padding: 0 10px 0 17px;
		gap: 14px;
		border: 2px solid #ecd5d7;
		border-bottom-color: #cdb6b9;
		border-radius: 24px;
		background: rgba(255, 255, 255, 0.85);
		background-clip: padding-box;
	}
	.tray {
		display: flex;
		align-items: stretch;
		justify-self: end;
		padding: 0 32px 2px 0;
	}
	.tray-btn {
		width: 48px;
		justify-content: center;
	}
	.ime { font-size: 22px; }
	.tray-group {
		gap: 10px;
		margin: 0 24px 0 12px;
	}
	.clock {
		align-items: flex-end;
		justify-content: center;
		margin-right: 14px;
		padding-bottom: 2px;
		font-size: 17px;
		color: #1a1a1a;
	}
</style>
